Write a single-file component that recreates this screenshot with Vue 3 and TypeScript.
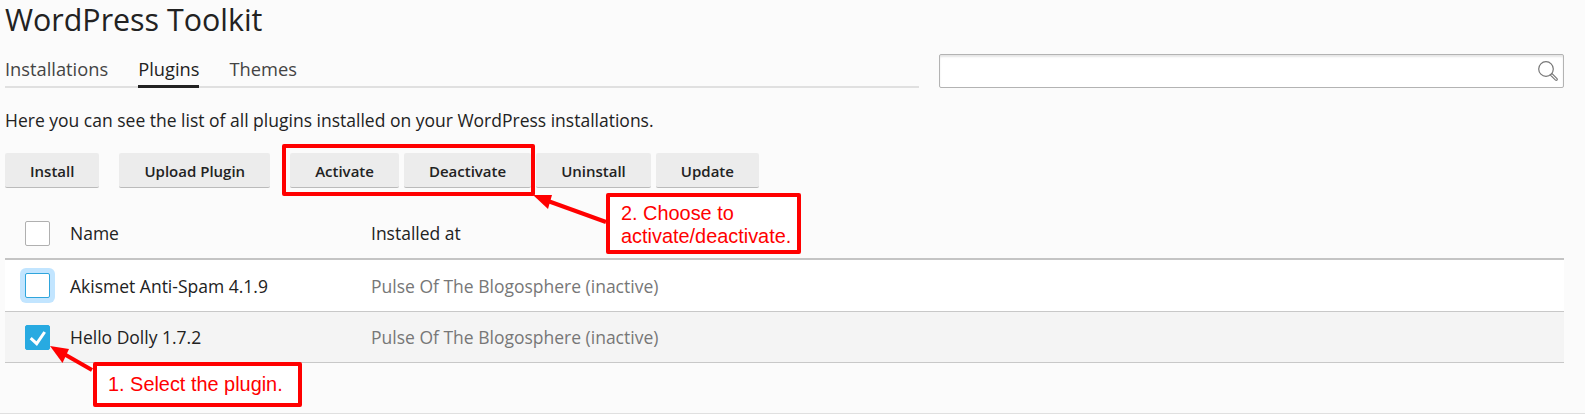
<template>
  <div class="page">
    <h1 class="title">WordPress Toolkit</h1>

    <div class="top-row">
      <nav class="tabs">
        <a v-for="tab in tabs" :key="tab" class="tab" :class="{ active: tab === 'Plugins' }">{{ tab }}</a>
      </nav>
      <div class="search">
        <svg class="search-icon" width="20" height="20" viewBox="0 0 20 20">
          <circle cx="8" cy="8" r="7.300" fill="none" stroke="#777" stroke-width="1.200" />
          <path d="M12.300 14l1.700-1.500 5 5.200c.4.500.4 1 0 1.400-.5.400-1 .4-1.500 0z" fill="#fff" stroke="#777" stroke-width="1.100" />
        </svg>
      </div>
    </div>

    <p class="hint">Here you can see the list of all plugins installed on your WordPress installations.</p>

    <div class="toolbar">
      <button class="btn spaced">Install</button>
      <button class="btn spaced">Upload Plugin</button>
      <button class="btn">Activate</button>
      <button class="btn">Deactivate</button>
      <button class="btn">Uninstall</button>
      <button class="btn">Update</button>
    </div>

    <div class="table">
      <div class="row head">
        <span class="check"></span>
        <span class="name">Name</span>
        <span class="where">Installed at</span>
      </div>
      <div v-for="p in plugins" :key="p.name" class="row item" :class="{ selected: p.checked }">
        <span class="check" :class="{ focus: !p.checked, on: p.checked }">
          <svg v-if="p.checked" class="tick" width="25" height="25" viewBox="0 0 25 25">
            <path d="M5.700 13.200l6 5.500 8-11.700" fill="none" stroke="#fff" stroke-width="3" />
          </svg>
        </span>
        <span class="name">{{ p.name }}</span>
        <span class="where muted">Pulse Of The Blogosphere (inactive)</span>
      </div>
    </div>

    <!-- annotations drawn on top of the screenshot -->
    <div class="frame"></div>
    <div class="note note-one">1. Select the plugin.</div>
    <div class="note note-two">2. Choose to<br />activate/deactivate.</div>
    <svg class="arrows" width="1585" height="414" viewBox="0 0 1585 414">
      <path d="M92 370L64 354" stroke="#f00" stroke-width="4" />
      <path d="M50 346l19 3-6.500 14z" fill="#f00" />
      <path d="M606 222L548 201" stroke="#f00" stroke-width="4" />
      <path d="M533 195h19l-4 14z" fill="#f00" />
    </svg>
  </div>
</template>

<script setup lang="ts">
const tabs = ['Installations', 'Plugins', 'Themes']

const plugins = [
  { name: 'Akismet Anti-Spam 4.1.9', checked: false },
  { name: 'Hello Dolly 1.7.2', checked: true }
]
</script>

<style>
html,
body {
  margin: 0;
  background: #fbfbfb;
}
</style>

<style scoped>
.page {
  position: relative;
  height: 413px;
  padding-left: 5px;
  overflow: hidden;
  border-bottom: 1px solid #e0e0e0;
  font-family: 'Open Sans', sans-serif;
  color: #222;
}

.title {
  margin: 0;
  font-size: 30.400px;
  font-weight: 400;
  line-height: 40px;
}

.top-row {
  display: flex;
  align-items: flex-start;
  margin-top: 14px;
  padding-right: 21px;
}

.tabs {
  display: flex;
  gap: 30px;
  width: 914px;
  height: 34px;
  border-bottom: 2px solid #e0e0e0;
  box-sizing: border-box;
}

.tab {
  height: 34px;
  box-sizing: border-box;
  font-size: 18.300px;
  line-height: 30px;
  color: #444;
}

.tab.active {
  color: #222;
  font-weight: 500;
  border-bottom: 3px solid #222;
}

.search {
  display: flex;
  align-items: center;
  justify-content: flex-end;
  flex: 1;
  height: 34px;
  margin-left: 20px;
  padding-right: 5px;
  box-sizing: border-box;
  background: #fff;
  border: 1px solid #b3b3b3;
  border-radius: 2px;
  box-shadow: inset 0 2px 2px #e6e6e6;
}

.hint {
  margin: 21px 0 0;
  font-size: 17.500px;
  line-height: 22px;
}

.toolbar {
  display: flex;
  margin-top: 22px;
  gap: 5px;
}

.btn {
  height: 35px;
  padding: 1px 25px 0;
  border: 0;
  border-bottom: 1px solid #bbb;
  border-radius: 2px;
  background: #ececec;
  font-family: inherit;
  font-size: 15px;
  font-weight: 600;
  color: #222;
}

.spaced {
  margin-right: 15px;
}

.table {
  margin-top: 20px;
  margin-right: 21px;
}

.row {
  display: flex;
  align-items: center;
  font-size: 17.500px;
}

.head {
  height: 50px;
  border-bottom: 2px solid #c4c4c4;
}

.item {
  height: 50px;
  background: #fff;
  border-bottom: 1px solid #c8c8c8;
}

.head + .item {
  height: 51px;
}

.item.selected {
  background: #f4f4f4;
}

.check {
  display: flex;
  align-items: center;
  justify-content: center;
  flex: none;
  width: 25px;
  height: 25px;
  margin-left: 20px;
  box-sizing: border-box;
  background: #fff;
  border: 1px solid #b0b0b0;
  border-radius: 2px;
}

.check.focus {
  border-color: #2fa5dc;
  box-shadow: 0 0 0 5px #c2e5ff;
}

.check.on {
  background: #28aae1;
  border-color: #28aae1;
}

.tick {
  flex: none;
}

.name {
  width: 301px;
  margin-left: 20px;
}

.muted {
  color: #777;
}

.frame {
  position: absolute;
  left: 282px;
  top: 144px;
  width: 253px;
  height: 52px;
  box-sizing: border-box;
  border: 4px solid #f00;
  border-radius: 2px;
}

.note {
  position: absolute;
  box-sizing: border-box;
  border: 4px solid #f00;
  border-radius: 2px;
  font-family: 'Liberation Sans', Arial, sans-serif;
  font-size: 19.900px;
  line-height: 23px;
  color: #f00;
  background: #fff;
}

.note-one {
  left: 93px;
  top: 362px;
  width: 209px;
  height: 45px;
  padding: 7px 11px;
}

.note-two {
  left: 606px;
  top: 193px;
  width: 195px;
  height: 61px;
  padding: 5px 11px;
}

.arrows {
  position: absolute;
  left: 0;
  top: 0;
  pointer-events: none;
}
</style>
